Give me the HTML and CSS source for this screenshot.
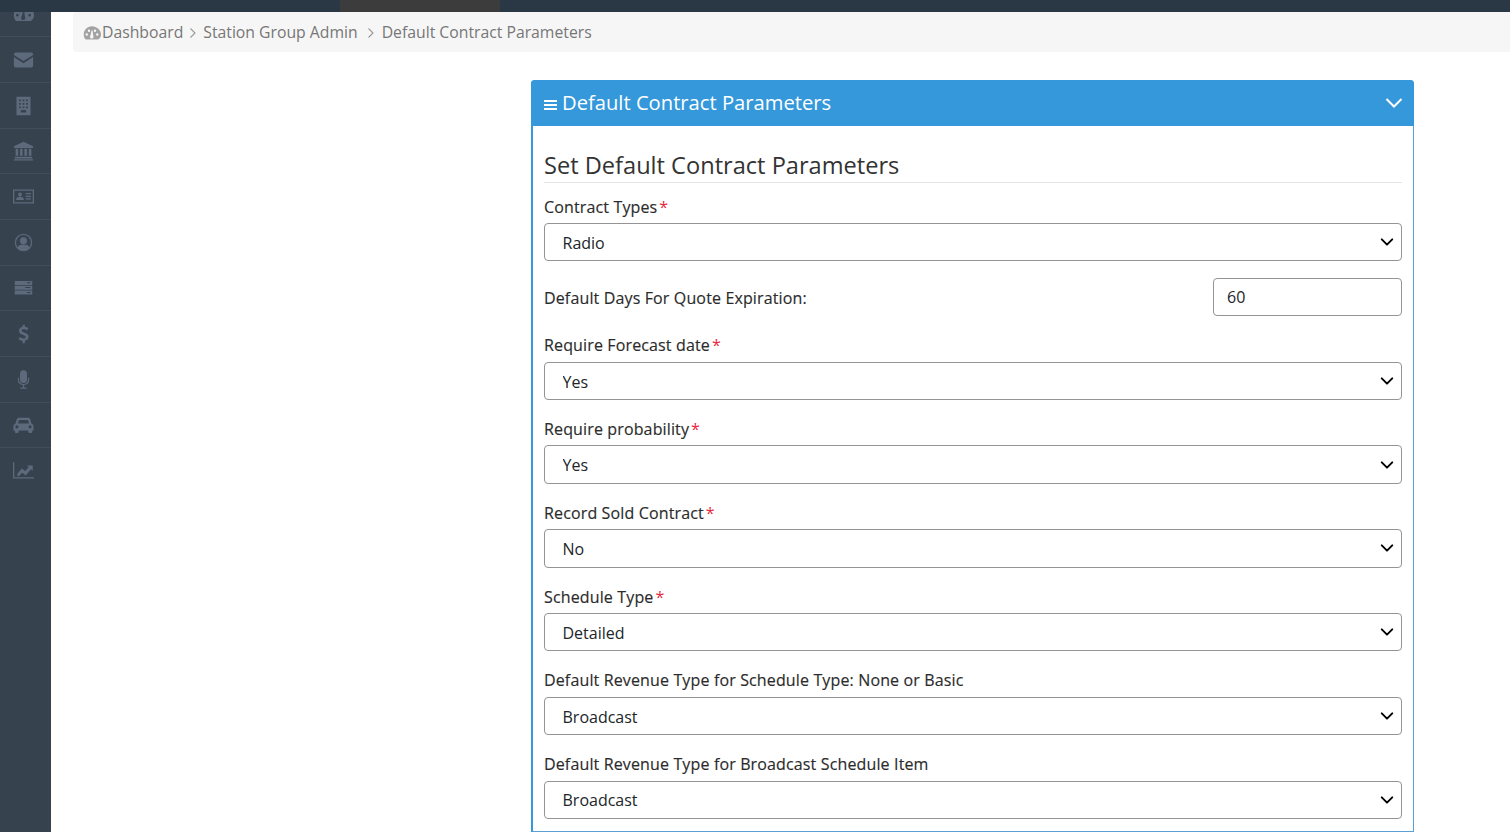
FILE: index.html
```html
<!DOCTYPE html>
<html lang="en">
<head>
<meta charset="utf-8">
<title>Default Contract Parameters</title>
<link rel="stylesheet" href="styles.css">
</head>
<body>
<header class="topbar"><div class="topbar-tab"></div></header>
<div class="shell">
  <nav class="sidebar">
    <div class="side-list">
      <a class="side-item"><svg class="ico" viewBox="0 0 24 24"><path fill-rule="evenodd" d="M12 3C5.5 3 1 8 1 14c0 2.2.6 4.200 1.700 5.800.3.400.7.700 1.200.700h16.200c.5 0 .9-.3 1.200-.7C23.400 18.200 24 16.200 24 14 24 8 18.500 3 12 3zM5 15.500a1.600 1.600 0 1 1 0-3.200 1.600 1.600 0 0 1 0 3.200zm3-5a1.600 1.600 0 1 1 0-3.200 1.600 1.600 0 0 1 0 3.200zm6 6.500a2.400 2.400 0 1 1-4-1.700l1.500-6.500h1.400l.6 6.300c.3.500.5 1.200.5 1.900zm2-6.500a1.600 1.600 0 1 1 0-3.200 1.600 1.600 0 0 1 0 3.200zm3 5a1.600 1.600 0 1 1 0-3.200 1.600 1.600 0 0 1 0 3.200z"/></svg></a>
      <a class="side-item"><svg class="ico" viewBox="0 0 24 24"><path d="M3 4h18a2 2 0 0 1 2 2v.8l-11 7-11-7V6a2 2 0 0 1 2-2z"/><path d="M1 9.200V19a2 2 0 0 0 2 2h18a2 2 0 0 0 2-2V9.200l-11 7z"/></svg></a>
      <a class="side-item"><svg class="ico" viewBox="0 0 24 24"><path fill-rule="evenodd" d="M4 2h16v21H4zM7 5v2h2V5zm4 0v2h2V5zm4 0v2h2V5zM7 9v2h2V9zm4 0v2h2V9zm4 0v2h2V9zm-8 4v2h2v-2zm4 0v2h2v-2zm4 0v2h2v-2zm-6 4v3h6v-3z"/></svg></a>
      <a class="side-item"><svg class="ico" viewBox="0 0 24 24"><path d="M12 2 1 7v2h22V7z"/><path d="M3 10h3v8H3zm5 0h3v8H8zm5 0h3v8h-3zm5 0h3v8h-3zM2 19h20v2H2zM1 22h22v1.500H1z"/></svg></a>
      <a class="side-item"><svg class="ico" viewBox="0 0 24 24"><path fill-rule="evenodd" d="M0 4h24v16H0zm1.500 1.500v13h21v-13zM8 7.500a2.200 2.200 0 1 1 0 4.400 2.200 2.200 0 0 1 0-4.400zM3.500 16c0-2.400 1.800-3.600 4.500-3.600s4.500 1.200 4.500 3.600zm11-8h6v1.500h-6zm0 3h6v1.500h-6zm0 3h6v1.500h-6z"/></svg></a>
      <a class="side-item"><svg class="ico" viewBox="0 0 24 24"><path fill-rule="evenodd" d="M12 2a10 10 0 1 1 0 20 10 10 0 0 1 0-20zm0 1.500a8.500 8.500 0 0 0-6.600 13.800C6.300 15 8.400 14.200 12 14.200s5.700.8 6.600 3.100A8.500 8.500 0 0 0 12 3.500zM12 6a4 4 0 1 1 0 8 4 4 0 0 1 0-8z"/></svg></a>
      <a class="side-item"><svg class="ico" viewBox="0 0 24 24"><path fill-rule="evenodd" d="M2 4.500h20v4.500H2zm14 1.500v1.200h4V6zM2 10h20v4.500H2zm12 1.500v1.200h6v-1.200zM2 15.500h20V20H2zM16 17v1.200h4V17z"/></svg></a>
      <a class="side-item"><svg class="ico" viewBox="0 0 24 24"><path d="M11 2h2.500v2.300c1.700.2 3.200.9 4 1.600l-1.400 2.500c-1.100-.8-2.500-1.400-3.900-1.400-1.500 0-2.400.6-2.400 1.600 0 1 1 1.500 3 2.200 3.200 1.100 5 2.300 5 5 0 2.500-1.700 4.200-4.300 4.600V23H11v-2.500c-1.900-.2-3.600-1-4.700-2.100l1.600-2.400c1.200 1 2.800 1.800 4.200 1.800 1.600 0 2.500-.7 2.500-1.700 0-1.100-1-1.700-3-2.400-2.800-1-4.800-2.100-4.800-4.800 0-2.300 1.600-4 4.200-4.500z"/></svg></a>
      <a class="side-item"><svg class="ico" viewBox="0 0 24 24"><path d="M12 1.500a4 4 0 0 1 4 4V12a4 4 0 0 1-8 0V5.500a4 4 0 0 1 4-4z"/><path d="M5.500 10h1.300v2a5.200 5.200 0 0 0 10.400 0v-2h1.300v2a6.500 6.500 0 0 1-5.800 6.400V21h3v1.500H8.300V21h3v-2.600A6.500 6.500 0 0 1 5.500 12z"/></svg></a>
      <a class="side-item"><svg class="ico" viewBox="0 .8 24 24"><path fill-rule="evenodd" d="M6.500 4h11c1 0 1.800.7 2.100 1.600l1.500 5C22.600 11.100 23.500 12.400 23.500 14v4.500H22V20a1.500 1.500 0 0 1-1.500 1.500h-1.500A1.500 1.500 0 0 1 17.500 20v-1.500h-11V20A1.500 1.500 0 0 1 5 21.500H3.500A1.500 1.500 0 0 1 2 20v-1.500H.5V14c0-1.600.9-2.900 2.400-3.400l1.500-5C4.700 4.700 5.500 4 6.500 4zm.4 2.500L5.600 10.500h12.800l-1.300-4zM4.500 12.500a1.800 1.800 0 1 0 0 3.600 1.800 1.800 0 0 0 0-3.600zm15 0a1.800 1.800 0 1 0 0 3.600 1.800 1.800 0 0 0 0-3.600z"/></svg></a>
      <a class="side-item"><svg class="ico" viewBox="0 1.500 24 24"><path d="M0 3h1.500v17H24v1.500H0z"/><path d="m5 16 5-6 4 3 4-4.500-2-2h6.500V13l-2-2-6 7-4-3-4 4H5z"/></svg></a>
    </div>
  </nav>
  <main class="main">
    <div class="crumbs">
      <svg class="crumb-ico" viewBox="0 0 24 24"><path fill-rule="evenodd" d="M12 3C5.500 3 1 8 1 14c0 2.200.6 4.200 1.700 5.800.3.400.7.700 1.200.7h16.200c.5 0 .9-.3 1.200-.7C23.400 18.200 24 16.200 24 14 24 8 18.500 3 12 3zM5 15.500a1.600 1.600 0 1 1 0-3.200 1.600 1.600 0 0 1 0 3.200zm3-5a1.600 1.600 0 1 1 0-3.200 1.600 1.600 0 0 1 0 3.200zm6 6.500a2.400 2.400 0 1 1-4-1.700l1.500-6.500h1.400l.6 6.300c.3.500.5 1.200.5 1.900zm2-6.500a1.600 1.600 0 1 1 0-3.200 1.600 1.600 0 0 1 0 3.200zm3 5a1.600 1.600 0 1 1 0-3.200 1.600 1.600 0 0 1 0 3.200z"/></svg>
      <span>Dashboard</span>
      <svg class="crumb-sep" viewBox="0 0 8 12"><path d="m1.500 1.500 4.500 4.500-4.500 4.500"/></svg>
      <span>Station Group Admin</span>
      <svg class="crumb-sep crumb-sep-wide" viewBox="0 0 8 12"><path d="m1.500 1.500 4.500 4.500-4.500 4.500"/></svg>
      <span>Default Contract Parameters</span>
    </div>
    <section class="panel">
      <div class="panel-head">
        <svg class="bars" viewBox="0 0 14 12" preserveAspectRatio="none"><path d="M0 1h14v2H0zm0 4h14v2H0zm0 4h14v2H0z"/></svg>
        <h2 class="panel-title">Default Contract Parameters</h2>
        <svg class="collapse" viewBox="0 0 18 12"><path d="m1.500 2 7.500 7.500L16.500 2"/></svg>
      </div>
      <div class="panel-body">
        <h3 class="section-title">Set Default Contract Parameters</h3>
        <div class="field">
          <label class="field-label">Contract Types<span class="req">*</span></label>
          <select class="control"><option>Radio</option></select>
        </div>
        <div class="field-inline">
          <label class="field-label field-label-inline">Default Days For Quote Expiration:</label>
          <input class="number" type="text" value="60">
        </div>
        <div class="field">
          <label class="field-label">Require Forecast date<span class="req">*</span></label>
          <select class="control"><option>Yes</option></select>
        </div>
        <div class="field">
          <label class="field-label">Require probability<span class="req">*</span></label>
          <select class="control"><option>Yes</option></select>
        </div>
        <div class="field">
          <label class="field-label">Record Sold Contract<span class="req">*</span></label>
          <select class="control"><option>No</option></select>
        </div>
        <div class="field">
          <label class="field-label">Schedule Type<span class="req">*</span></label>
          <select class="control"><option>Detailed</option></select>
        </div>
        <div class="field">
          <label class="field-label">Default Revenue Type for Schedule Type: None or Basic</label>
          <select class="control"><option>Broadcast</option></select>
        </div>
        <div class="field">
          <label class="field-label">Default Revenue Type for Broadcast Schedule Item</label>
          <select class="control"><option>Broadcast</option></select>
        </div>
      </div>
    </section>
  </main>
</div>
</body>
</html>
```
FILE: styles.css
```css
* { box-sizing: border-box; }
html, body { height: 100%; }
body {
  margin: 0;
  overflow: hidden;
  background: #fff;
  color: #212529;
  font-family: "Open Sans", sans-serif;
  font-size: 16px;
  display: flex;
  flex-direction: column;
}
.topbar {
  height: 12px;
  flex: none;
  background: #2a3745;
  padding-left: 340px;
}
.topbar-tab { width: 160px; height: 100%; background: #3c3c3c; }
.shell { flex: 1; min-height: 0; display: flex; }
.sidebar { width: 51px; flex: none; background: #37424f; overflow: hidden; }
.side-list { margin-top: -20.500px; }
.side-item {
  height: 45.700px;
  display: flex;
  align-items: center;
  justify-content: center;
  padding-right: 4px;
  border-bottom: 1px solid #414d5b;
}
.side-item:last-child { border-bottom: none; }
.ico { width: 21px; height: 21px; fill: #5c6a7c; }
.main { flex: 1; min-width: 0; display: flex; flex-direction: column; padding-left: 22px; }
.crumbs {
  height: 40px;
  flex: none;
  display: flex;
  align-items: center;
  padding-left: 10px;
  background: #f6f6f6;
  border-radius: 4px 0 0 4px;
  color: #777;
  font-size: 15.750px;
}
.crumb-ico { width: 18px; height: 18px; fill: #a3a3a3; margin: 1px 1px 0 0; }
.crumb-sep { width: 8px; height: 12px; margin: 1px 6px 0 6px; fill: none; stroke: #999; stroke-width: 1.100; }
.crumb-sep-wide { margin: 1px 7px 0 9px; }
.panel {
  margin: 28px 96px 0 458px;
  border: 1px solid #5b9fd6;
  border-left: 2px solid #3498db;
  border-radius: 4px 4px 0 0;
  flex: 1;
  min-height: 0;
}
.panel-head {
  height: 46px;
  margin: -1px -1px 0 -2px;
  display: flex;
  align-items: center;
  padding: 0 11px 0 13px;
  background: #3498db;
  color: #fff;
  border-radius: 4px 4px 0 0;
}
.bars { width: 13px; height: 12px; fill: #fff; margin-right: 5px; margin-top: 4px; }
.panel-title { flex: 1; margin: 0 0 2px; font-size: 20.200px; font-weight: 400; line-height: 24px; }
.collapse { width: 18px; height: 12px; fill: none; stroke: #fff; stroke-width: 2; }
.panel-body { padding: 22px 11px 0 11px; }
.section-title {
  margin: 0 0 11px;
  padding-top: 1px;
  border-bottom: 1px solid #e5e5e5;
  font-size: 23.600px;
  font-weight: 400;
  line-height: 33px;
  color: #333;
}
.field { margin-bottom: 16.400px; }
.field-label { display: block; font-weight: 500; letter-spacing: .14px; line-height: 24px; padding-top: .5px; margin-bottom: 4.500px; color: #2b2b2b; -webkit-text-stroke: .15px #2b2b2b; }
.field-label-inline { margin-bottom: 0; padding-top: 2px; }
.req { color: #e8283c; margin-left: 2px; font-weight: 400; -webkit-text-stroke: 0; }
.control {
  display: block;
  width: 100%;
  height: 38.400px;
  padding: 1.400px 36px 0 17.500px;
  appearance: none;
  border: 1px solid #949494;
  border-radius: 4px;
  background: #fff url("data:image/svg+xml,%3Csvg xmlns='http://www.w3.org/2000/svg' viewBox='0 0 16 16'%3E%3Cpath fill='none' stroke='%23000' stroke-linecap='round' stroke-linejoin='round' stroke-width='2.200' d='m2 5 6 6 6-6'/%3E%3C/svg%3E") no-repeat right 7px center / 14px 14px;
  color: #212529;
  font-family: inherit;
  font-size: 16px;
}
.field-inline { display: flex; align-items: center; justify-content: space-between; margin-bottom: 16.900px; }
.number {
  width: 189px;
  height: 38px;
  padding: 0 13px;
  border: 1px solid #949494;
  border-radius: 4px;
  color: #212529;
  font-family: inherit;
  font-size: 16px;
}
```
